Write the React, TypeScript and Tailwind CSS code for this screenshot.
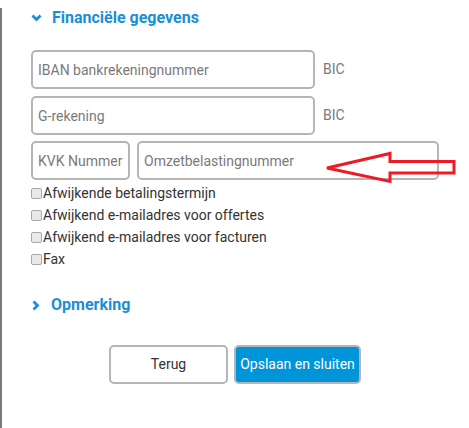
import React from 'react';

const ChevronDown = () => (
  <svg width="11" height="8" viewBox="0 0 11 8" className="shrink-0">
    <path d="M1.5 1.5 L5.5 5.5 L9.5 1.5" fill="none" stroke="#1a8fd6" strokeWidth="2.8" />
  </svg>
);

const ChevronRight = () => (
  <svg width="8" height="11" viewBox="0 0 8 11" className="shrink-0">
    <path d="M1.5 1.5 L5.5 5.5 L1.5 9.5" fill="none" stroke="#1a8fd6" strokeWidth="2.8" />
  </svg>
);

const Field = ({ placeholder, className }: { placeholder: string; className: string }) => (
  <input
    placeholder={placeholder}
    className={`h-[39px] rounded-[5px] border-2 border-[#b5b5b5] bg-white px-[5px] text-[14px] text-[#444] placeholder:text-[#7a7a7a] outline-none ${className}`}
  />
);

const Check = ({ label }: { label: string }) => (
  <label className="flex items-center h-[22px] text-[14px] text-[#333]">
    <span className="w-[11px] h-[11px] rounded-[2px] border border-[#a8a8a8] bg-[#e9e9e9] mr-[1px]" />
    {label}
  </label>
);

export default function App() {
  return (
    <div className="relative w-[469px] h-[428px] bg-white border-l-2 border-[#7a7a7a] font-['Roboto',sans-serif]">
      {/* Financiële gegevens */}
      <div className="flex items-center h-[20px] mt-[8px] pl-[29px]">
        <ChevronDown />
        <span className="ml-[10px] text-[16px] font-bold text-[#1a8fd6]">Financiële gegevens</span>
      </div>

      <div className="pl-[29px] pt-[22px]">
        <div className="flex items-center">
          <Field placeholder="IBAN bankrekeningnummer" className="w-[284px]" />
          <span className="ml-[8px] text-[14px] text-[#7a7a7a]">BIC</span>
        </div>
        <div className="flex items-center mt-[7px]">
          <Field placeholder="G-rekening" className="w-[284px]" />
          <span className="ml-[8px] text-[14px] text-[#7a7a7a]">BIC</span>
        </div>
        <div className="flex items-center gap-[7px] mt-[6px]">
          <Field placeholder="KVK Nummer" className="w-[99px]" />
          <Field placeholder="Omzetbelastingnummer" className="w-[302px]" />
        </div>
        <div className="mt-[2px] flex flex-col">
          <Check label="Afwijkende betalingstermijn" />
          <Check label="Afwijkend e-mailadres voor offertes" />
          <Check label="Afwijkend e-mailadres voor facturen" />
          <Check label="Fax" />
        </div>
      </div>

      {/* Opmerking */}
      <div className="flex items-center h-[20px] mt-[25px] pl-[30px]">
        <ChevronRight />
        <span className="ml-[11px] text-[16px] font-bold text-[#1a8fd6]">Opmerking</span>
      </div>

      <div className="flex gap-[6px] pl-[107px] mt-[30px]">
        <button className="w-[119px] h-[39px] rounded-[5px] border-2 border-[#b5b5b5] bg-white text-[14px] text-[#333]">
          Terug
        </button>
        <button className="w-[127px] h-[39px] rounded-[5px] border-2 border-[#b5b5b5] bg-[#0094d9] text-[14px] text-white">
          Opslaan en sluiten
        </button>
      </div>

      {/* red annotation arrow */}
      <svg className="absolute left-[-2px] top-0 pointer-events-none" width="469" height="428">
        <path
          d="M327 160 L390 145.5 L390 153.5 L454 153.5 L454 165 L390 165 L390 173.5 Z"
          fill="none"
          stroke="#ed1c24"
          strokeWidth="3"
          strokeLinejoin="miter"
        />
      </svg>
    </div>
  );
}
